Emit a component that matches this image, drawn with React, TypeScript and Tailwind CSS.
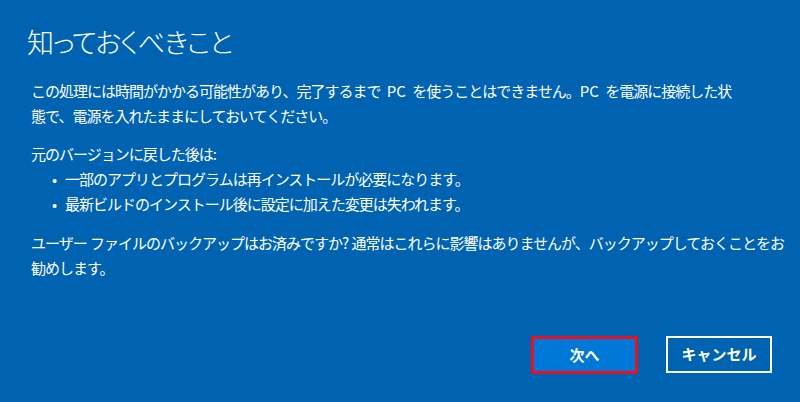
import React from "react";

export default function App() {
  const font = {
    fontFamily: '"Noto Sans CJK JP", "Noto Sans", sans-serif',
  };
  return (
    <div
      className="w-[800px] h-[402px] bg-[#0063b1] text-white flex flex-col overflow-hidden"
      style={font}
    >
      <h1 className="ml-[27px] mt-[22px] text-[27px] leading-[40px] font-light tracking-[-1px] [font-feature-settings:'palt']">
        知っておくべきこと
      </h1>
      <div className="ml-[31px] mt-[16px] text-[15px] leading-[25px] tracking-[-1px] [word-spacing:1px] whitespace-nowrap">
        <p>
          この処理には時間がかかる可能性があり、完了するまで
          <span className="tracking-normal [word-spacing:3px]"> PC </span>
          を使うことはできません。<span className="tracking-normal [word-spacing:3px]">PC </span>
          を電源に接続した状
          <br />
          態で、電源を入れたままにしておいてください。
        </p>
        <p className="mt-[13px]">元のバージョンに戻した後は:</p>
        <ul className="ml-[21px]">
          <li className="flex gap-[9px]">
            <span>•</span>
            <span>一部のアプリとプログラムは再インストールが必要になります。</span>
          </li>
          <li className="flex gap-[9px]">
            <span>•</span>
            <span>最新ビルドのインストール後に設定に加えた変更は失われます。</span>
          </li>
        </ul>
        <p className="mt-[14px]">
          ユーザー ファイルのバックアップはお済みですか? 通常はこれらに影響はありませんが、バックアップしておくことをお
          <br />
          勧めします。
        </p>
      </div>
      <div className="mt-auto mb-[28px] mr-[28px] flex justify-end gap-[28px]">
        <button className="w-[107px] h-[38px] bg-[#0078d7] border-[3px] border-[#e81123] text-[15px] font-bold">
          次へ
        </button>
        <button className="w-[106px] h-[37px] border-2 border-white text-[15px] font-bold">
          キャンセル
        </button>
      </div>
    </div>
  );
}
